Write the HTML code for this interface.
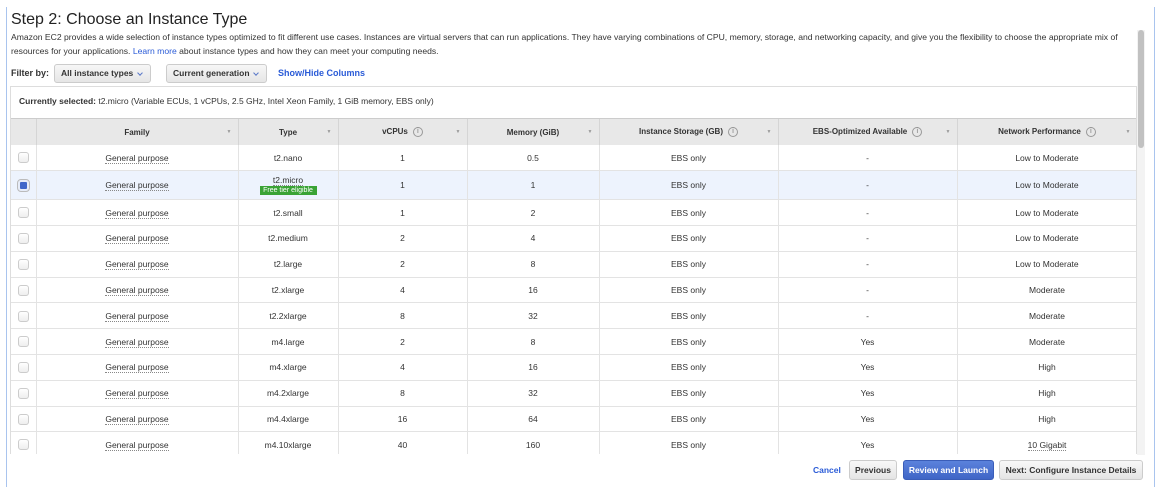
<!DOCTYPE html>
<html><head><meta charset="utf-8"><style>
*{box-sizing:border-box;margin:0;padding:0}
body{width:1167px;height:494px;background:#fff;font-family:"Liberation Sans",Arial,sans-serif;color:#333;position:relative;overflow:hidden}
.abs{position:absolute}
.vl{position:absolute;width:1px;background:#a9c4ee}
h1{position:absolute;left:11px;top:11px;font-size:16px;font-weight:normal;color:#222}
.desc{position:absolute;left:11px;top:30px;width:1125px;font-size:8.6px;line-height:14px;color:#333;white-space:nowrap}
a{color:#2a5bd7;text-decoration:none}
.sel{position:absolute;top:64px;height:19px;border:1px solid #ccc;border-radius:3px;background:linear-gradient(#f7f7f7,#e6e6e6);font-size:8.5px;font-weight:bold;line-height:17px;padding-left:6px;color:#333}
.sel i{position:absolute;right:8px;top:6px;width:4px;height:4px;border-right:1px solid #5a78c8;border-bottom:1px solid #5a78c8;transform:rotate(45deg)}
.box{position:absolute;left:10px;top:86px;width:1127px;height:368px;border:1px solid #ddd;border-bottom:none;overflow:hidden}
.cur{height:32px;font-size:8.5px;line-height:28px;padding-left:8px;border-bottom:1px solid #ccc}
table{border-collapse:collapse;width:1126px;table-layout:fixed}
th{background:#e8e8e8;height:26px;font-size:8px;font-weight:bold;color:#333;border-right:1px solid #d5d5d5;position:relative;text-align:center}
th .c{position:absolute;right:6px;top:10px;font-size:5px;color:#999;font-weight:normal}
.ii{display:inline-block;width:10px;height:10px;border:1px solid #999;border-radius:50%;font-size:7px;line-height:8px;font-weight:normal;color:#777;margin-left:5px;vertical-align:middle}
td{height:25.8px;font-size:8.5px;text-align:center;border-right:1px solid #e3e3e3;border-bottom:1px solid #e3e3e3;color:#333}
tr.s td{background:#edf3fd;height:29px}
.cb{display:inline-block;width:11px;height:11px;border:1px solid #ccc;border-radius:3px;background:linear-gradient(#fff,#eee);vertical-align:middle}
tr.s .cb{background:#3f66c9;border:2px solid #e6ecf8;outline:1px solid #bbb}
.u{border-bottom:1px dotted #888}
.ft{display:block;margin:1px auto 0;width:57px;background:#3aa335;color:#fff;font-size:7px;line-height:9px}
.sb{position:absolute;left:1137px;top:30px;width:8px;height:425px;background:#f3f3f3}
.sb div{width:6px;margin-left:1px;height:118px;background:#c1c1c1;border-radius:3px}
.btn{position:absolute;top:460px;height:20px;border:1px solid #ccc;border-radius:3px;background:linear-gradient(#f8f8f8,#e4e4e4);font-size:8.5px;font-weight:bold;line-height:18px;text-align:center;color:#333}
</style></head><body>
<div class="vl" style="left:6px;top:7px;height:480px"></div>
<div class="vl" style="left:1154px;top:7px;height:480px"></div>
<h1>Step 2: Choose an Instance Type</h1>
<div class="desc">Amazon EC2 provides a wide selection of instance types optimized to fit different use cases. Instances are virtual servers that can run applications. They have varying combinations of CPU, memory, storage, and networking capacity, and give you the flexibility to choose the appropriate mix of<br>resources for your applications. <a>Learn more</a> about instance types and how they can meet your computing needs.</div>
<div class="abs" style="left:11px;top:68px;font-size:9px;font-weight:bold">Filter by:</div>
<div class="sel" style="left:54px;width:97px">All instance types<i></i></div>
<div class="sel" style="left:166px;width:101px">Current generation<i></i></div>
<div class="abs" style="left:278px;top:68px;font-size:9px;font-weight:bold;color:#2a5bd7">Show/Hide Columns</div>
<div class="box">
<div class="cur"><b>Currently selected:</b> t2.micro (Variable ECUs, 1 vCPUs, 2.5 GHz, Intel Xeon Family, 1 GiB memory, EBS only)</div>
<table>
<colgroup><col style="width:25px"><col style="width:202px"><col style="width:100px"><col style="width:129px"><col style="width:132px"><col style="width:179px"><col style="width:179px"><col style="width:180px"></colgroup>
<tr><th></th><th>Family<span class="c">&#9660;</span></th><th>Type<span class="c">&#9660;</span></th><th>vCPUs<span class="ii">i</span><span class="c">&#9660;</span></th><th>Memory (GiB)<span class="c">&#9660;</span></th><th>Instance Storage (GB)<span class="ii">i</span><span class="c">&#9660;</span></th><th>EBS-Optimized Available<span class="ii">i</span><span class="c">&#9660;</span></th><th>Network Performance<span class="ii">i</span><span class="c">&#9660;</span></th></tr>
<tr><td><span class="cb"></span></td><td><span class="u">General purpose</span></td><td>t2.nano</td><td>1</td><td>0.5</td><td>EBS only</td><td>-</td><td>Low to Moderate</td></tr>
<tr class="s"><td><span class="cb"></span></td><td><span class="u">General purpose</span></td><td><span class="u">t2.micro</span><span class="ft">Free tier eligible</span></td><td>1</td><td>1</td><td>EBS only</td><td>-</td><td>Low to Moderate</td></tr>
<tr><td><span class="cb"></span></td><td><span class="u">General purpose</span></td><td>t2.small</td><td>1</td><td>2</td><td>EBS only</td><td>-</td><td>Low to Moderate</td></tr>
<tr><td><span class="cb"></span></td><td><span class="u">General purpose</span></td><td>t2.medium</td><td>2</td><td>4</td><td>EBS only</td><td>-</td><td>Low to Moderate</td></tr>
<tr><td><span class="cb"></span></td><td><span class="u">General purpose</span></td><td>t2.large</td><td>2</td><td>8</td><td>EBS only</td><td>-</td><td>Low to Moderate</td></tr>
<tr><td><span class="cb"></span></td><td><span class="u">General purpose</span></td><td>t2.xlarge</td><td>4</td><td>16</td><td>EBS only</td><td>-</td><td>Moderate</td></tr>
<tr><td><span class="cb"></span></td><td><span class="u">General purpose</span></td><td>t2.2xlarge</td><td>8</td><td>32</td><td>EBS only</td><td>-</td><td>Moderate</td></tr>
<tr><td><span class="cb"></span></td><td><span class="u">General purpose</span></td><td>m4.large</td><td>2</td><td>8</td><td>EBS only</td><td>Yes</td><td>Moderate</td></tr>
<tr><td><span class="cb"></span></td><td><span class="u">General purpose</span></td><td>m4.xlarge</td><td>4</td><td>16</td><td>EBS only</td><td>Yes</td><td>High</td></tr>
<tr><td><span class="cb"></span></td><td><span class="u">General purpose</span></td><td>m4.2xlarge</td><td>8</td><td>32</td><td>EBS only</td><td>Yes</td><td>High</td></tr>
<tr><td><span class="cb"></span></td><td><span class="u">General purpose</span></td><td>m4.4xlarge</td><td>16</td><td>64</td><td>EBS only</td><td>Yes</td><td>High</td></tr>
<tr><td><span class="cb"></span></td><td><span class="u">General purpose</span></td><td>m4.10xlarge</td><td>40</td><td>160</td><td>EBS only</td><td>Yes</td><td><span class="u">10 Gigabit</span></td></tr>
</table>
</div>
<div class="sb"><div></div></div>
<div class="abs" style="left:813px;top:465px;font-size:8.5px;font-weight:bold;color:#2a5bd7">Cancel</div>
<div class="btn" style="left:849px;width:48px">Previous</div>
<div class="btn" style="left:903px;width:91px;background:linear-gradient(#5b82dc,#3f65c6);border-color:#3a5db8;color:#fff">Review and Launch</div>
<div class="btn" style="left:999px;width:144px">Next: Configure Instance Details</div>
</body></html>
